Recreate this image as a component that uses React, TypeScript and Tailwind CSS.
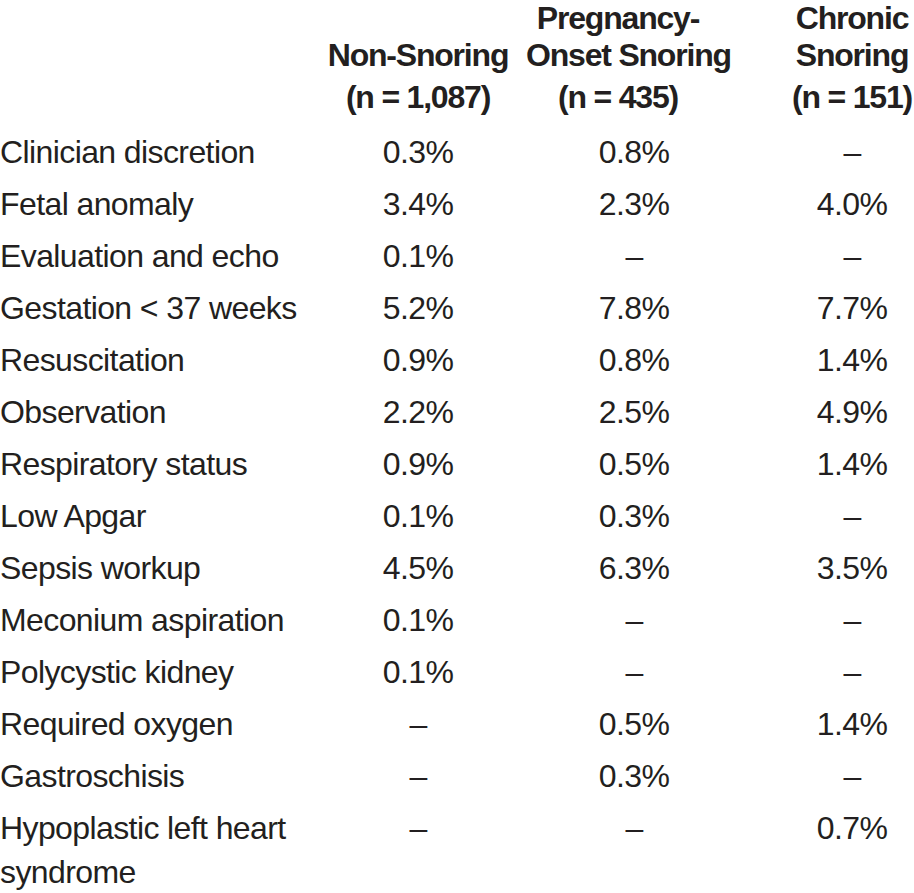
const rows: [string, string, string, string][] = [
  ["Clinician discretion", "0.3%", "0.8%", "–"],
  ["Fetal anomaly", "3.4%", "2.3%", "4.0%"],
  ["Evaluation and echo", "0.1%", "–", "–"],
  ["Gestation < 37 weeks", "5.2%", "7.8%", "7.7%"],
  ["Resuscitation", "0.9%", "0.8%", "1.4%"],
  ["Observation", "2.2%", "2.5%", "4.9%"],
  ["Respiratory status", "0.9%", "0.5%", "1.4%"],
  ["Low Apgar", "0.1%", "0.3%", "–"],
  ["Sepsis workup", "4.5%", "6.3%", "3.5%"],
  ["Meconium aspiration", "0.1%", "–", "–"],
  ["Polycystic kidney", "0.1%", "–", "–"],
  ["Required oxygen", "–", "0.5%", "1.4%"],
  ["Gastroschisis", "–", "0.3%", "–"],
];

export default function App() {
  return (
    <div
      className="w-[914px] h-[893px] overflow-hidden bg-white text-[#231f20]"
      style={{ fontFamily: '"Liberation Sans Narrow", "Arial Narrow", "Liberation Sans", sans-serif' }}
    >
      {/* header */}
      <div className="grid grid-cols-[310px_216px_216px_1fr] font-bold text-[32px] leading-[37px] tracking-[-1.2px] whitespace-nowrap h-[126px]">
        <div />
        <div className="text-center pt-[37px]">
          <div>Non-Snoring</div>
          <div className="mt-[5px]">(n = 1,087)</div>
        </div>
        <div className="text-center pr-[32px]">
          <div>Pregnancy-</div>
          <div>Onset Snoring</div>
          <div className="mt-[5px]">(n = 435)</div>
        </div>
        <div className="text-center pl-[48px]">
          <div>Chronic</div>
          <div>Snoring</div>
          <div className="mt-[5px]">(n = 151)</div>
        </div>
      </div>

      {/* body */}
      <div className="text-[32px] tracking-[-0.6px]">
        {rows.map((r) => (
          <div key={r[0]} className="grid grid-cols-[310px_216px_216px_1fr] h-[52px] leading-[52px]">
            <div className="whitespace-nowrap">{r[0]}</div>
            <div className="text-center">{r[1]}</div>
            <div className="text-center">{r[2]}</div>
            <div className="text-center pl-[48px]">{r[3]}</div>
          </div>
        ))}
        <div className="grid grid-cols-[310px_216px_216px_1fr] leading-[52px]">
          <div className="leading-[44px] pt-[4px]">
            Hypoplastic left heart
            <br />
            syndrome
          </div>
          <div className="text-center">–</div>
          <div className="text-center">–</div>
          <div className="text-center pl-[48px]">0.7%</div>
        </div>
      </div>
    </div>
  );
}
